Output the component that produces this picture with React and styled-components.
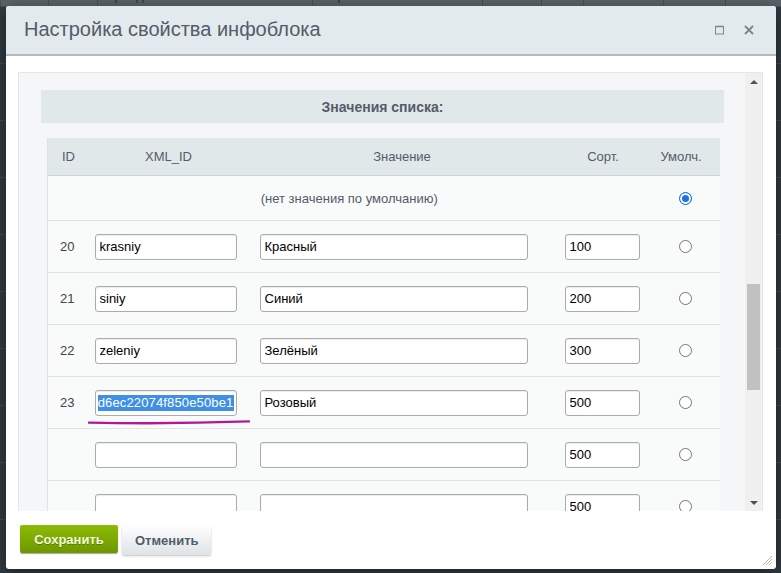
import React from "react";
import styled, { createGlobalStyle } from "styled-components";

const GlobalStyle = createGlobalStyle`
  html, body {
    margin: 0;
    padding: 0;
    overflow: hidden;
    background: #333c42;
    font-family: "Liberation Sans", Arial, sans-serif;
  }
`;

const Page = styled.div`
  position: relative;
  width: 781px;
  height: 573px;
  overflow: hidden;
  background: #323b41;
`;

const Backdrop = styled.div`
  margin-top: -12px;
`;

const BackRow = styled.div`
  display: grid;
  grid-template-columns: 48px 49px 215px 170px 59px 42px 80px 62px 56px;
  height: 18px;
  background: #5b646a;
  border-bottom: 1px solid #495258;
  font-size: 13px;
  color: #283035;
  line-height: 16px;
`;

const BackCell = styled.div`
  padding-left: 8px;
  border-left: 1px solid #485156;
  white-space: nowrap;
  overflow: hidden;
`;

const BackLine = styled.div`
  height: 56px;
  border-bottom: 1px solid #434c52;
`;

const Dialog = styled.div`
  position: absolute;
  left: 6px;
  top: 6px;
  width: 770px;
  height: 563px;
  display: flex;
  flex-direction: column;
  background: #fff;
  border-radius: 3px;
  box-shadow: 0 4px 18px rgba(0, 0, 0, 0.45);
  overflow: hidden;
`;

const Header = styled.div`
  height: 48px;
  flex-shrink: 0;
  display: flex;
  align-items: center;
  justify-content: space-between;
  padding: 0 22px 0 18px;
  background: #e3eaed;
  border-bottom: 2px solid #b3b9bd;
`;

const Title = styled.div`
  font-size: 20px;
  color: #535c69;
  padding-bottom: 1px;
`;

const HeaderTools = styled.div`
  display: flex;
  align-items: center;
  gap: 19px;
`;

const Body = styled.div`
  flex: 1;
  min-height: 0;
  padding: 16px 13px 0 12px;
`;

const ScrollBox = styled.div`
  height: 100%;
  display: flex;
  background: #f4f6f7;
  border: 1px solid #e3e7e9;
  border-bottom: none;
  box-sizing: border-box;
`;

const ScrollContent = styled.div`
  flex: 1;
  overflow: hidden;
  padding: 17px 21px 0 22px;
`;

const Scrollbar = styled.div`
  width: 17px;
  flex-shrink: 0;
  position: relative;
  background: #f0f0f0;
  display: flex;
  flex-direction: column;
  align-items: center;
  justify-content: space-between;
  padding: 7px 0 6px;
  box-sizing: border-box;
`;

const Thumb = styled.div`
  position: absolute;
  left: 2px;
  right: 2px;
  top: 211px;
  height: 106px;
  background: #c1c1c1;
`;

const Arrow = styled.div`
  width: 0;
  height: 0;
  border-left: 4px solid transparent;
  border-right: 4px solid transparent;
  ${(p) =>
    p.down
      ? "border-top: 4px solid #505050;"
      : "border-bottom: 4px solid #505050;"}
`;

const SectionHead = styled.div`
  height: 33px;
  display: flex;
  align-items: center;
  justify-content: center;
  background: #e1e8ea;
  font-size: 14px;
  font-weight: bold;
  color: #535c69;
  margin-bottom: 15px;
`;

const Table = styled.table`
  width: 672px;
  margin-left: 6px;
  border-collapse: collapse;
  table-layout: fixed;
  background: #f9fafa;
  border-left: 1px solid #dde2e4;
  font-size: 13px;
`;

const Th = styled.th`
  height: 37px;
  padding: 0;
  background: #e1e8ea;
  border-bottom: 1px solid #cdd3d6;
  font-weight: normal;
  color: #535c69;
  text-align: ${(p) => p.align || "center"};
  padding-left: ${(p) => p.pl || 0}px;
  padding-right: ${(p) => p.pr || 0}px;
`;

const Tr = styled.tr`
  height: ${(p) => (p.short ? 45 : 52)}px;
  border-bottom: 1px solid #dfe3e5;
`;

const Td = styled.td`
  padding: 0;
  padding-left: ${(p) => p.pl || 0}px;
  text-align: ${(p) => p.align || "left"};
  color: ${(p) => p.color || "#333"};
  vertical-align: middle;
  position: relative;
`;

const Field = styled.input`
  box-sizing: border-box;
  width: ${(p) => p.w}px;
  height: 26px;
  padding: 0 4px;
  border: 1px solid #a8acaf;
  border-radius: 3px;
  background: #fff;
  box-shadow: inset 0 1px 1px rgba(0, 0, 0, 0.08);
  font-family: "Liberation Sans", Arial, sans-serif;
  font-size: 13px;
  color: #000;
  outline: none;
  display: block;
`;

const FakeField = styled.div`
  box-sizing: border-box;
  width: ${(p) => p.w}px;
  height: 26px;
  padding: 0 2px;
  border: 1px solid #a8acaf;
  border-radius: 3px;
  background: #fff;
  box-shadow: inset 0 1px 1px rgba(0, 0, 0, 0.08);
  display: flex;
  align-items: center;
  justify-content: flex-end;
  overflow: hidden;
  white-space: nowrap;
  font-size: 13px;
`;

const Selected = styled.span`
  background: #3f8fe4;
  color: #fff;
  line-height: 16px;
  letter-spacing: 0.15px;
`;

const Radio = styled.span`
  display: block;
  margin: 0 auto;
  width: 13px;
  height: 13px;
  box-sizing: border-box;
  border-radius: 50%;
  border: 1px solid ${(p) => (p.checked ? "#1a73e8" : "#767676")};
  background: ${(p) => (p.checked ? "#1a73e8" : "#fff")};
  box-shadow: ${(p) => (p.checked ? "inset 0 0 0 2px #fff" : "none")};
`;

const Underline = styled.svg`
  position: absolute;
  left: -1px;
  top: 42px;
  pointer-events: none;
`;

const Footer = styled.div`
  height: 58px;
  flex-shrink: 0;
  display: flex;
  align-items: flex-start;
  gap: 4px;
  padding: 14px 14px 0;
  box-sizing: border-box;
  position: relative;
`;

const Button = styled.button`
  height: ${(p) => (p.primary ? 28 : 30)}px;
  padding: 0 ${(p) => (p.primary ? 14 : 13)}px;
  border: none;
  border-radius: 2px;
  font-family: "Liberation Sans", Arial, sans-serif;
  font-size: 13px;
  font-weight: bold;
  cursor: pointer;
  ${(p) =>
    p.primary
      ? `
    background: linear-gradient(#8ebb06, #6d9700);
    color: #f3f8dc;
    text-shadow: 0 1px 0 rgba(0,0,0,0.25);
    box-shadow: 0 1px 1px rgba(0,0,0,0.35);
    width: 98px;
  `
      : `
    background: linear-gradient(#ffffff, #dde3e6);
    color: #535c69;
    box-shadow: 0 1px 2px rgba(0,0,0,0.25);
    width: 89px;
  `}
`;

const Grip = styled.svg`
  position: absolute;
  right: 3px;
  bottom: 3px;
`;

const MaxIcon = () => (
  <svg width="10" height="10" viewBox="0 0 10 10">
    <rect x="0.5" y="1.5" width="8" height="7.5" fill="none" stroke="#7c858c" strokeWidth="1" />
    <line x1="0.5" y1="1.5" x2="8.5" y2="1.5" stroke="#7c858c" strokeWidth="1.5" />
  </svg>
);

const CloseIcon = () => (
  <svg width="10" height="10" viewBox="0 0 10 10">
    <path d="M1 1L9 9M9 1L1 9" stroke="#7c858c" strokeWidth="1.8" />
  </svg>
);

const rows = [
  { id: "20", xml: "krasniy", value: "Красный", sort: "100" },
  { id: "21", xml: "siniy", value: "Синий", sort: "200" },
  { id: "22", xml: "zeleniy", value: "Зелёный", sort: "300" },
  { id: "23", xml: "d6ec22074f850e50be1", value: "Розовый", sort: "500", selected: true },
  { id: "", xml: "", value: "", sort: "500" },
  { id: "", xml: "", value: "", sort: "500" },
  { id: "", xml: "", value: "", sort: "500" },
];

export default function App() {
  return (
    <Page>
      <GlobalStyle />
      <Backdrop>
        <BackRow>
          <BackCell />
          <BackCell>5</BackCell>
          <BackCell>Бренд</BackCell>
          <BackCell>Справочник</BackCell>
          <BackCell />
          <BackCell />
          <BackCell />
          <BackCell>200</BackCell>
          <BackCell>BRAND</BackCell>
        </BackRow>
        {Array.from({ length: 10 }).map((_, i) => (
          <BackLine key={i} />
        ))}
      </Backdrop>

      <Dialog>
        <Header>
          <Title>Настройка свойства инфоблока</Title>
          <HeaderTools>
            <MaxIcon />
            <CloseIcon />
          </HeaderTools>
        </Header>

        <Body>
          <ScrollBox>
            <ScrollContent>
              <SectionHead>Значения списка:</SectionHead>
              <Table>
                <colgroup>
                  <col style={{ width: 41 }} />
                  <col style={{ width: 160 }} />
                  <col style={{ width: 307 }} />
                  <col style={{ width: 95 }} />
                  <col style={{ width: 69 }} />
                </colgroup>
                <thead>
                  <tr>
                    <Th align="left" pl={14}>ID</Th>
                    <Th>XML_ID</Th>
                    <Th>Значение</Th>
                    <Th>Сорт.</Th>
                    <Th pr={8}>Умолч.</Th>
                  </tr>
                </thead>
                <tbody>
                  <Tr short>
                    <Td colSpan={4} align="center" color="#535c69">
                      (нет значения по умолчанию)
                    </Td>
                    <Td>
                      <Radio checked />
                    </Td>
                  </Tr>
                  {rows.map((r, i) => (
                    <Tr key={i}>
                      <Td pl={12} color="#444">{r.id}</Td>
                      <Td pl={6}>
                        {r.selected ? (
                          <>
                            <FakeField w={142}>
                              <Selected>{r.xml}</Selected>
                            </FakeField>
                            <Underline width="162" height="6" viewBox="0 0 162 6">
                              <path
                                d="M1 3.6 C 40 4.4, 110 4.2, 161 2.4"
                                stroke="#b0179d"
                                strokeWidth="2.4"
                                fill="none"
                                strokeLinecap="round"
                              />
                            </Underline>
                          </>
                        ) : (
                          <Field w={142} defaultValue={r.xml} />
                        )}
                      </Td>
                      <Td pl={11}>
                        <Field w={268} defaultValue={r.value} />
                      </Td>
                      <Td pl={9}>
                        <Field w={75} defaultValue={r.sort} />
                      </Td>
                      <Td>
                        <Radio />
                      </Td>
                    </Tr>
                  ))}
                </tbody>
              </Table>
            </ScrollContent>
            <Scrollbar>
              <Arrow />
              <Thumb />
              <Arrow down />
            </Scrollbar>
          </ScrollBox>
        </Body>

        <Footer>
          <Button primary>Сохранить</Button>
          <Button>Отменить</Button>
          <Grip width="11" height="11" viewBox="0 0 11 11">
            <path d="M10 1L1 10M10 4L4 10M10 7L7 10" stroke="#b5b9bc" strokeWidth="1" />
          </Grip>
        </Footer>
      </Dialog>
    </Page>
  );
}
